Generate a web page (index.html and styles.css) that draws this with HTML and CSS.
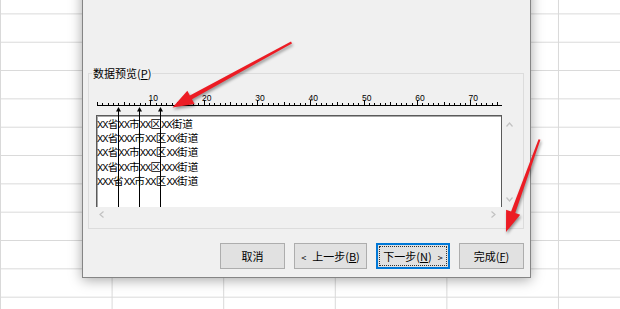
FILE: index.html
```html
<!DOCTYPE html>
<html lang="zh-CN">
<head>
    <meta charset="UTF-8">
    <title>文本导入向导</title>
    <link rel="stylesheet" href="styles.css">
</head>
<body>
<div class="dialog">
    <fieldset class="group">
        <legend>数据预览(<u>P</u>)</legend>
        <div class="preview">
            <svg class="ruler" width="405" height="27" viewBox="0 0 405 27">
                <defs>
                    <pattern id="tick" width="16" height="2" x="0" y="15" patternUnits="userSpaceOnUse">
                        <path d="M0.5 0v2M5.5 0v2M11.5 0v2" stroke="#000"/>
                    </pattern>
                </defs>
                <rect x="0" y="15" width="405" height="2" fill="url(#tick)"/>
                <path d="M0 17.5H405" stroke="#000"/>
                <path d="M0.5 14v3M27.5 14v3M80.5 14v3M133.5 14v3M187.5 14v3M240.5 14v3M293.5 14v3M347.5 14v3M400.5 14v3" stroke="#000"/>
                <path d="M53.5 12v5M107.5 12v5M160.5 12v5M213.5 12v5M267.5 12v5M320.5 12v5M373.5 12v5" stroke="#000"/>
                <g class="nums">
                    <text x="56.3" y="13">10</text>
                    <text x="109.7" y="13">20</text>
                    <text x="163" y="13">30</text>
                    <text x="216.3" y="13">40</text>
                    <text x="269.7" y="13">50</text>
                    <text x="323" y="13">60</text>
                    <text x="376.3" y="13">70</text>
                </g>
            </svg>
            <div class="view">
                <div class="data">
                    <div class="line"><span class="x">XX</span>省<span class="x">XX</span>市<span class="x">XX</span>区<span class="x">XX</span>街道</div>
                    <div class="line"><span class="x">XX</span>省<span class="x">XXX</span>市<span class="x">XX</span>区<span class="x">XX</span>街道</div>
                    <div class="line"><span class="x">XX</span>省<span class="x">XX</span>市<span class="x">XXX</span>区<span class="x">XX</span>街道</div>
                    <div class="line"><span class="x">XX</span>省<span class="x">XX</span>市<span class="x">XX</span>区<span class="x">XXX</span>街道</div>
                    <div class="line"><span class="x">XXX</span>省<span class="x">XX</span>市<span class="x">XX</span>区<span class="x">XX</span>街道</div>
                </div>
                <div class="vscroll">
                    <svg width="7" height="5"><polyline points="0.5,4.5 3.5,1 6.5,4.5"/></svg>
                    <svg width="7" height="5"><polyline points="0.5,0.5 3.5,4 6.5,0.5"/></svg>
                </div>
                <div class="hscroll">
                    <svg width="5" height="7"><polyline points="4.5,0.5 1,3.5 4.5,6.5"/></svg>
                    <svg width="5" height="7"><polyline points="0.5,0.5 4,3.5 0.5,6.5"/></svg>
                </div>
            </div>
            <svg class="breaks" width="421" height="134">
                <path d="M22.5 23V119M43.5 23V119M64.5 23V119" stroke="#000"/>
                <path d="M22.5 19l2.5 4.5h-5zM43.5 19l2.5 4.5h-5zM64.5 19l2.5 4.5h-5z" fill="#000"/>
            </svg>
        </div>
    </fieldset>
    <div class="buttons">
        <button class="btn">取消</button>
        <button class="btn wide"><span class="lt">&lt;</span>上一步(<u>B</u>)</button>
        <button class="btn wide default">下一步(<u>N</u>)<span class="gt">&gt;</span></button>
        <button class="btn">完成(<u>F</u>)</button>
    </div>
</div>

<svg class="marks" width="620" height="309">
    <polygon points="291.02,41.62 189.88,95.50 187.33,90.85 172.5,107.5 194.53,104.01 191.98,99.36 291.98,43.38"/>
    <polygon points="538.56,139.16 511.08,211.51 506.10,209.71 506,232 520.20,214.81 515.22,213.01 540.44,139.84"/>
</svg>
</body>
</html>
```

FILE: styles.css
```css
body{
    margin:0;
    width:620px;
    height:309px;
    overflow:hidden;
    position:relative;
    background-color:#fff;
    background-image:linear-gradient(to right,#d9d9d9 1px,transparent 1px),
                     linear-gradient(to bottom,#d9d9d9 1px,transparent 1px);
    background-size:111.6px 100%,100% 28.33px;
    background-position:0 0,0 13.4px;
    font-family:"Noto Sans CJK SC",sans-serif;
}
.dialog{
    position:absolute;
    left:82px;
    top:-124px;
    width:449px;
    height:402px;
    box-sizing:border-box;
    display:flex;
    flex-direction:column;
    justify-content:flex-end;
    padding:0 6px 8px 5px;
    background:#f0f0f0;
    border:1px solid #858585;
    box-shadow:0 2px 12px rgba(0,0,0,0.35);
}
.group{
    margin:0;
    min-width:0;
    padding:8px 6px 6px 7px;
    border:1px solid #dcdcdc;
}
.group legend{
    margin-left:-4px;
    padding:0 1px;
    font-size:11px;
    line-height:14px;
    color:#000;
}
.preview{
    position:relative;
}
.ruler{
    display:block;
    margin-left:1px;
}
.nums{
    font-family:"Liberation Sans",sans-serif;
    font-size:8.5px;
    text-anchor:middle;
    fill:#000;
}
.view{
    display:grid;
    grid-template-columns:406px 15px;
    grid-template-rows:92px 15px;
}
.data{
    box-sizing:border-box;
    background:#fff;
    border:1px solid #5a5a5a;
    border-bottom:0;
    box-shadow:inset 1px 1px 0 #a8a8a8;
    padding-top:1px;
    font-family:"Noto Sans CJK SC",sans-serif;
    font-size:10.667px;
    color:#000;
    white-space:nowrap;
}
.line{
    height:14.2px;
    line-height:14.2px;
}
.x{
    font-family:"Liberation Mono",monospace;
    font-size:10.5px;
    letter-spacing:-0.967px;
}
.vscroll{
    display:flex;
    flex-direction:column;
    justify-content:space-between;
    align-items:center;
    padding:7px 0 5px;
}
.hscroll{
    display:flex;
    justify-content:space-between;
    align-items:center;
    padding:0 6px 0 3px;
}
.vscroll svg,.hscroll svg{
    display:block;
    fill:none;
    stroke:#c2c2c2;
    stroke-width:1.2;
}
.breaks{
    position:absolute;
    left:0;
    top:0;
}
.buttons{
    display:flex;
    justify-content:flex-end;
    gap:9px;
    margin-top:14px;
}
.btn{
    width:65px;
    height:26px;
    padding:0;
    border:1px solid #adadad;
    background:#e1e1e1;
    font-family:"Noto Sans CJK SC",sans-serif;
    font-size:11px;
    color:#000;
}
.btn.wide{
    width:73px;
}
.btn.default{
    width:74px;
    border-color:#0078d7;
    box-shadow:inset 0 0 0 1px #0078d7;
    outline:1px dotted #333;
    outline-offset:-4px;
}
.lt,.gt{
    font-size:9px;
}
.lt{
    margin-right:6px;
}
.gt{
    margin-left:6px;
}
.marks{
    position:absolute;
    left:0;
    top:0;
    fill:#ec1c24;
    filter:drop-shadow(1px 2px 1.5px rgba(0,0,0,0.4));
}
```
